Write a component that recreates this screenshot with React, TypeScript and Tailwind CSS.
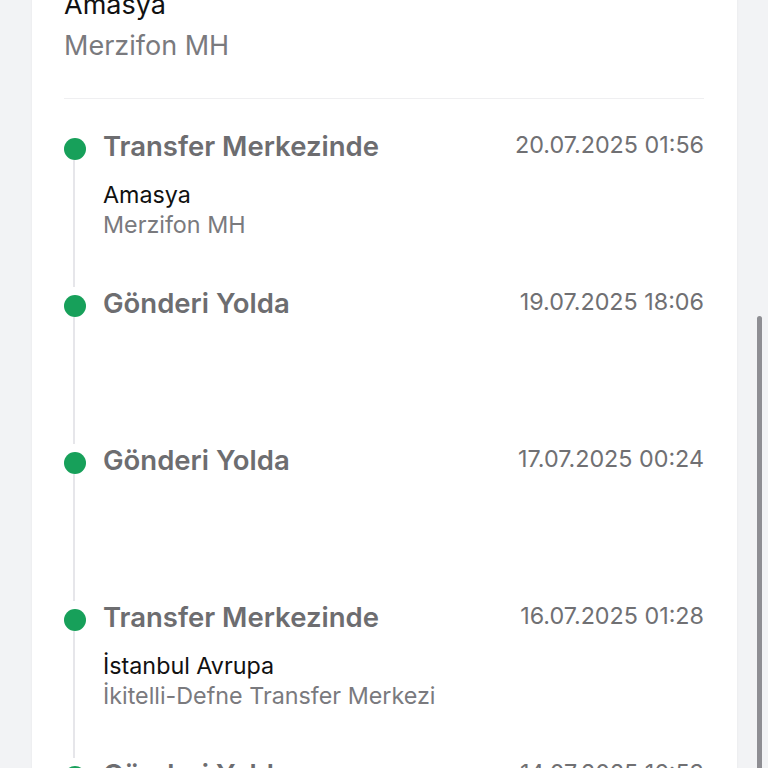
import React from "react";

type Item = { title: string; date: string; city?: string; place?: string };

const items: Item[] = [
  { title: "Transfer Merkezinde", date: "20.07.2025 01:56", city: "Amasya", place: "Merzifon MH" },
  { title: "Gönderi Yolda", date: "19.07.2025 18:06" },
  { title: "Gönderi Yolda", date: "17.07.2025 00:24" },
  { title: "Transfer Merkezinde", date: "16.07.2025 01:28", city: "İstanbul Avrupa", place: "İkitelli-Defne Transfer Merkezi" },
  { title: "Gönderi Yolda", date: "14.07.2025 16:53" },
];

export default function App() {
  return (
    <div
      className="relative w-[768px] h-[768px] overflow-hidden bg-[#f2f3f5]"
      style={{ fontFamily: "Inter, 'Noto Sans', sans-serif" }}
    >
      <div className="ml-[32px] w-[705px] min-h-[800px] bg-white px-[32px] pr-[33px] -mt-[12px] shadow-[0_0_2px_rgba(0,0,0,0.06)]">
        <div>
          <div className="text-[27px] leading-[34px] text-[#111]">Amasya</div>
          <div className="mt-[7px] text-[27px] leading-[34px] text-[#7a7a7e]">Merzifon MH</div>
        </div>
        <div className="mt-[35px] h-px bg-[#efeff1]" />
        <div className="mt-[31px]">
          {items.map((it, i) => (
            <div key={i} className="flex h-[157px]">
              <div className="flex w-[39px] flex-col items-start">
                <div className="mt-[8px] h-[22px] w-[22px] shrink-0 rounded-full bg-[#17a05a]" />
                <div className="ml-[9px] w-[2px] flex-1 bg-[#e6e6ea]" />
              </div>
              <div className="flex-1">
                <div className="flex items-start justify-between">
                  <div className="text-[27.5px] leading-[32px] font-semibold text-[#6d6d70]">{it.title}</div>
                  <div className="text-[23.3px] leading-[30px] text-[#707073]">{it.date}</div>
                </div>
                {it.city && (
                  <div className="mt-[18px]">
                    <div className="text-[23.3px] leading-[30px] text-[#111]">{it.city}</div>
                    <div className="text-[23.3px] leading-[30px] text-[#7a7a7e]">{it.place}</div>
                  </div>
                )}
              </div>
            </div>
          ))}
        </div>
      </div>
      <div className="absolute right-[6px] top-[316px] h-[480px] w-[5px] rounded-full bg-[#8e8e93]" />
    </div>
  );
}
